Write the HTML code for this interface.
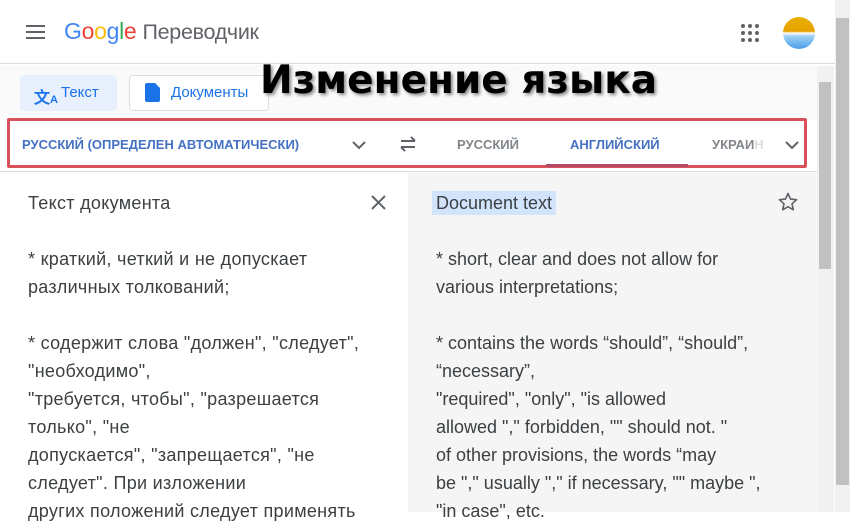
<!DOCTYPE html>
<html><head><meta charset="utf-8"><style>
*{margin:0;padding:0;box-sizing:border-box}
body{width:850px;height:512px;overflow:hidden;position:relative;background:#fff;font-family:"Liberation Sans",Arial,sans-serif}
.abs{position:absolute}
.t{font-size:18px;color:#3c4043;line-height:28px;white-space:nowrap}
</style></head><body>
<!-- header -->
<div class="abs" style="left:0;top:0;width:835px;height:64px;border-bottom:1px solid #dadce0;background:#fff"></div>
<div class="abs" style="left:26px;top:25px;width:19px;height:2px;background:#5f6368;box-shadow:0 6px 0 #5f6368,0 12px 0 #5f6368"></div>
<div class="abs" style="left:64px;top:18px;font-size:23px;letter-spacing:-0.3px"><span style="color:#4285f4">G</span><span style="color:#ea4335">o</span><span style="color:#fbbc05">o</span><span style="color:#4285f4">g</span><span style="color:#34a853">l</span><span style="color:#ea4335">e</span> <span style="color:#5f6368;font-size:21.5px">Переводчик</span></div>
<svg class="abs" style="left:741px;top:24px" width="18" height="18"><g fill="#5f6368"><circle cx="2" cy="2" r="2"/><circle cx="9" cy="2" r="2"/><circle cx="16" cy="2" r="2"/><circle cx="2" cy="9" r="2"/><circle cx="9" cy="9" r="2"/><circle cx="16" cy="9" r="2"/><circle cx="2" cy="16" r="2"/><circle cx="9" cy="16" r="2"/><circle cx="16" cy="16" r="2"/></g></svg>
<div class="abs" style="left:783px;top:17px;width:32px;height:32px;border-radius:50%;background:linear-gradient(#e8b000 0,#e8a000 45%,#fff 50%,#9dd0f5 60%,#4a9ee8 100%)"></div>
<!-- toolbar -->
<div class="abs" style="left:0;top:65px;width:817px;height:108px;background:#fafafa"></div>
<div class="abs" style="left:20px;top:75px;width:97px;height:36px;background:#e8f0fe;border-radius:4px"></div>
<div class="abs" style="left:34px;top:84px;font-size:16px;color:#1a73e8;font-weight:bold">文<span style="font-size:11px">A</span></div>
<div class="abs" style="left:61px;top:84px;font-size:15px;color:#1a73e8">Текст</div>
<div class="abs" style="left:129px;top:75px;width:140px;height:36px;border:1px solid #dadce0;border-radius:4px;background:#fff"></div>
<svg class="abs" style="left:145px;top:83px" width="15" height="19"><path d="M0 2a2 2 0 0 1 2-2h8l5 5v12a2 2 0 0 1-2 2H2a2 2 0 0 1-2-2z" fill="#1a73e8"/></svg>
<div class="abs" style="left:171px;top:84px;font-size:15px;color:#1a73e8">Документы</div>
<div class="abs" style="left:260px;top:58px;font-size:39px;font-weight:bold;color:#000;font-family:'DejaVu Sans',sans-serif;text-shadow:2px 2px 3px #888;white-space:nowrap">Изменение языка</div>
<!-- lang bar -->
<div class="abs" style="left:0;top:120px;width:817px;height:52px;background:#fff;border-bottom:1px solid #dadce0"></div>
<div class="abs" style="left:7px;top:118px;width:800px;height:50px;border:3px solid #d9515a;border-radius:2px"></div>
<div class="abs" style="left:22px;top:137px;font-size:13px;font-weight:bold;color:#4471c4">РУССКИЙ (ОПРЕДЕЛЕН АВТОМАТИЧЕСКИ)</div>
<svg class="abs" style="left:351px;top:140px" width="16" height="10"><path d="M2 2l6 6 6-6" stroke="#5f6368" stroke-width="2" fill="none"/></svg>
<svg class="abs" style="left:398px;top:136px" width="20" height="16"><path d="M3 5h14M13 1l4 4M17 11H3M7 15l-4-4" stroke="#5f6368" stroke-width="2" fill="none"/></svg>
<div class="abs" style="left:457px;top:137px;font-size:13px;font-weight:bold;color:#80868b">РУССКИЙ</div>
<div class="abs" style="left:570px;top:137px;font-size:13px;font-weight:bold;color:#4471c4">АНГЛИЙСКИЙ</div>
<div class="abs" style="left:546px;top:164px;width:142px;height:3px;background:#b34a6a"></div>
<div class="abs" style="left:712px;top:137px;font-size:13px;font-weight:bold;color:#80868b">УКРАИ<span style="color:#ddd">Н</span></div>
<svg class="abs" style="left:784px;top:140px" width="16" height="10"><path d="M2 2l6 6 6-6" stroke="#5f6368" stroke-width="2" fill="none"/></svg>
<!-- panels -->
<div class="abs" style="left:408px;top:173px;width:409px;height:339px;background:#f5f5f5"></div>
<div class="abs t" style="left:28px;top:189px;letter-spacing:0.3px">Текст документа</div>
<svg class="abs" style="left:371px;top:195px" width="15" height="15"><path d="M1 1l13 13M14 1L1 14" stroke="#5f6368" stroke-width="2"/></svg>
<div class="abs t" style="left:28px;top:245px;letter-spacing:0.3px">* краткий, четкий и не допускает<br>различных толкований;<br><br>* содержит слова "должен", "следует",<br>"необходимо",<br>"требуется, чтобы", "разрешается<br>только", "не<br>допускается", "запрещается", "не<br>следует". При изложении<br>других положений следует применять</div>
<div class="abs t" style="left:432px;top:189px"><span style="background:#d2e3fc;padding:2px 4px">Document text</span></div>
<svg class="abs" style="left:778px;top:192px" width="20" height="20"><path d="M10 1.5l2.5 5.6 6.1.6-4.6 4.1 1.3 6-5.3-3.1-5.3 3.1 1.3-6-4.6-4.1 6.1-.6z" stroke="#5f6368" stroke-width="1.6" fill="none" stroke-linejoin="round"/></svg>
<div class="abs t" style="left:436px;top:245px">* short, clear and does not allow for<br>various interpretations;<br><br>* contains the words “should”, “should”,<br>“necessary”,<br>"required", "only", "is allowed<br>allowed "," forbidden, "" should not. "<br>of other provisions, the words “may<br>be "," usually "," if necessary, "" maybe ",<br>"in case", etc.</div>
<!-- scrollbars -->
<div class="abs" style="left:817px;top:66px;width:17px;height:446px;background:#f1f1f1"></div>
<div class="abs" style="left:819px;top:82px;width:12px;height:187px;background:#c1c1c1"></div>
<div class="abs" style="left:835px;top:0;width:15px;height:512px;background:#f1f1f1"></div>
<div class="abs" style="left:836px;top:18px;width:13px;height:467px;background:#c1c1c1"></div>
</body></html>
